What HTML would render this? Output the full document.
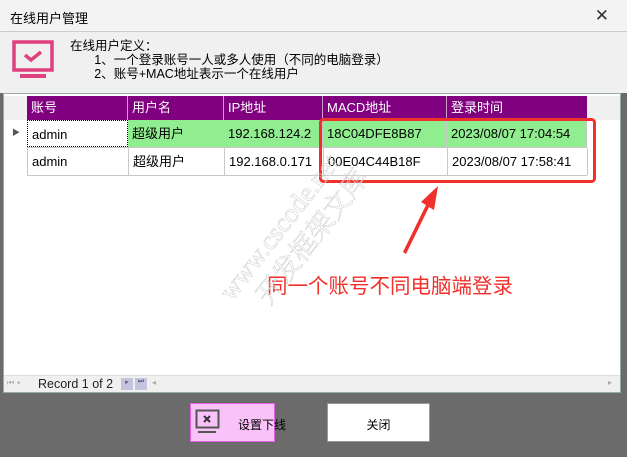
<!DOCTYPE html>
<html><head><meta charset="utf-8"><style>
*{margin:0;padding:0;box-sizing:border-box}
body{width:627px;height:457px;overflow:hidden;background:#6b6b6b;font-family:"Liberation Sans","Noto Sans CJK SC",sans-serif;position:relative;font-size:12px;color:#000}
.abs{position:absolute}
.title{left:0;top:0;width:627px;height:32px;background:#f3f3f3;border-bottom:1px solid #ccc;font-size:13px;padding:8px 0 0 10px}
.hdr{left:0;top:32px;width:627px;height:61px;background:#f0f0f0}
.grid{left:3px;top:93px;width:618px;height:300px;background:#fff;border:1px solid #9aa}
.c{position:absolute;height:100%;border-right:1px solid #c8c8c8;padding:0 4px;white-space:nowrap;line-height:24px;font-size:13px}
.r .c{line-height:27px}
</style></head><body>
<div class="abs title">在线用户管理</div>
<div class="abs" style="right:18px;top:6px;font-size:17px;color:#333">✕</div>
<div class="abs hdr">
 <svg class="abs" style="left:12px;top:8px" width="44" height="40" viewBox="0 0 44 40"><rect x="2" y="2" width="38" height="28" fill="none" stroke="#e0407f" stroke-width="3.5"/><path d="M13 15 l6 5 l10 -8" fill="none" stroke="#e0407f" stroke-width="3.5"/><rect x="8" y="34" width="26" height="4" fill="#e0407f"/></svg>
 <div class="abs" style="left:70px;top:7px;line-height:14px;font-size:12.5px">在线用户定义：<br>&nbsp;&nbsp;&nbsp;&nbsp;&nbsp;&nbsp;&nbsp;1、一个登录账号一人或多人使用（不同的电脑登录）<br>&nbsp;&nbsp;&nbsp;&nbsp;&nbsp;&nbsp;&nbsp;2、账号+MAC地址表示一个在线用户</div>
</div>
<div class="abs grid">
 <div class="abs" style="left:0;top:2px;width:100%;height:24px;background:#f0f0f0"></div>
 <div class="abs" style="left:23px;top:2px;width:560px;height:24px;background:#800080;color:#fff">
  <div class="c" style="left:0;width:101px;border-color:#c9a0c9">账号</div>
  <div class="c" style="left:101px;width:96px;border-color:#c9a0c9">用户名</div>
  <div class="c" style="left:197px;width:99px;border-color:#c9a0c9">IP地址</div>
  <div class="c" style="left:296px;width:124px;border-color:#c9a0c9">MACD地址</div>
  <div class="c" style="left:420px;width:140px;border:none">登录时间</div>
 </div>
 <div class="abs" style="left:8px;top:33px;font-size:8px;color:#555">▶</div>
 <div class="abs r" style="left:23px;top:26px;width:560px;height:28px;background:#90ee90;border-bottom:1px solid #c8c8c8">
  <div class="c" style="left:0;width:101px;background:#fff;border:1px dotted #000">admin</div>
  <div class="c" style="left:101px;width:96px">超级用户</div>
  <div class="c" style="left:197px;width:99px">192.168.124.2</div>
  <div class="c" style="left:296px;width:124px">18C04DFE8B87</div>
  <div class="c" style="left:420px;width:140px">2023/08/07 17:04:54</div>
 </div>
 <div class="abs r" style="left:23px;top:54px;width:560px;height:28px;border-bottom:1px solid #c8c8c8;border-left:1px solid #c8c8c8">
  <div class="c" style="left:0;width:101px">admin</div>
  <div class="c" style="left:101px;width:96px">超级用户</div>
  <div class="c" style="left:197px;width:99px">192.168.0.171</div>
  <div class="c" style="left:296px;width:124px">00E04C44B18F</div>
  <div class="c" style="left:420px;width:140px">2023/08/07 17:58:41</div>
 </div>
 <div class="abs" style="left:0;top:281px;width:616px;height:17px;background:#f0f0f0;border-top:1px solid #ddd;font-size:12.5px">
  <span class="abs" style="left:3px;top:2px;font-size:8px;color:#aaa">⏮ ◂</span>
  <span class="abs" style="left:34px;top:1px;color:#222">Record 1 of 2</span>
  <span class="abs" style="left:117px;top:2px;width:12px;height:12px;background:#c4c4dc;font-size:7px;color:#558;text-align:center">▸</span>
  <span class="abs" style="left:131px;top:2px;width:12px;height:12px;background:#c4c4dc;font-size:7px;color:#558;text-align:center">⏭</span>
  <span class="abs" style="left:148px;top:2px;font-size:8px;color:#aaa">◂</span>
  <span class="abs" style="left:604px;top:2px;font-size:8px;color:#aaa">▸</span>
 </div>
</div>
<svg class="abs" style="left:0;top:0" width="627" height="457">
 <rect x="320.5" y="119.5" width="274" height="62" rx="3" fill="none" stroke="#f0302a" stroke-width="3"/>
 <path d="M403 252 L426 205 L421 202 L438 186 L434 210 L429 207 L406 254Z" fill="#f0302a"/>
 <text x="267" y="293" font-size="20.5" fill="#f0302a" font-family="Noto Sans CJK SC,sans-serif">同一个账号不同电脑端登录</text>
 <g transform="translate(232,302) rotate(-52)" font-family="Liberation Serif,Noto Serif CJK SC,serif" font-size="27">
  <text x="0" y="0" fill="none" stroke="#d4d4d4" stroke-width=".6">www.cscode.net</text>
  <text x="20" y="32" fill="none" stroke="#d4d4d4" stroke-width=".6">开发框架文库</text>
 </g>
</svg>
<div class="abs" style="left:190px;top:403px;width:85px;height:39px;background:#f9c2f9;border:1px solid #e060e0"></div>
<svg class="abs" style="left:195px;top:409px" width="26" height="28"><rect x="1.5" y="1.5" width="22" height="17" fill="none" stroke="#555" stroke-width="2"/><path d="M9 7l6 6M15 7l-6 6" stroke="#333" stroke-width="2"/><rect x="3" y="22" width="18" height="2" fill="#555"/></svg>
<div class="abs" style="left:238px;top:416px;font-size:12px">设置下线</div>
<div class="abs" style="left:327px;top:403px;width:103px;height:39px;background:#fff;border:1px solid #999;text-align:center;padding-top:12px">关闭</div>
</body></html>
